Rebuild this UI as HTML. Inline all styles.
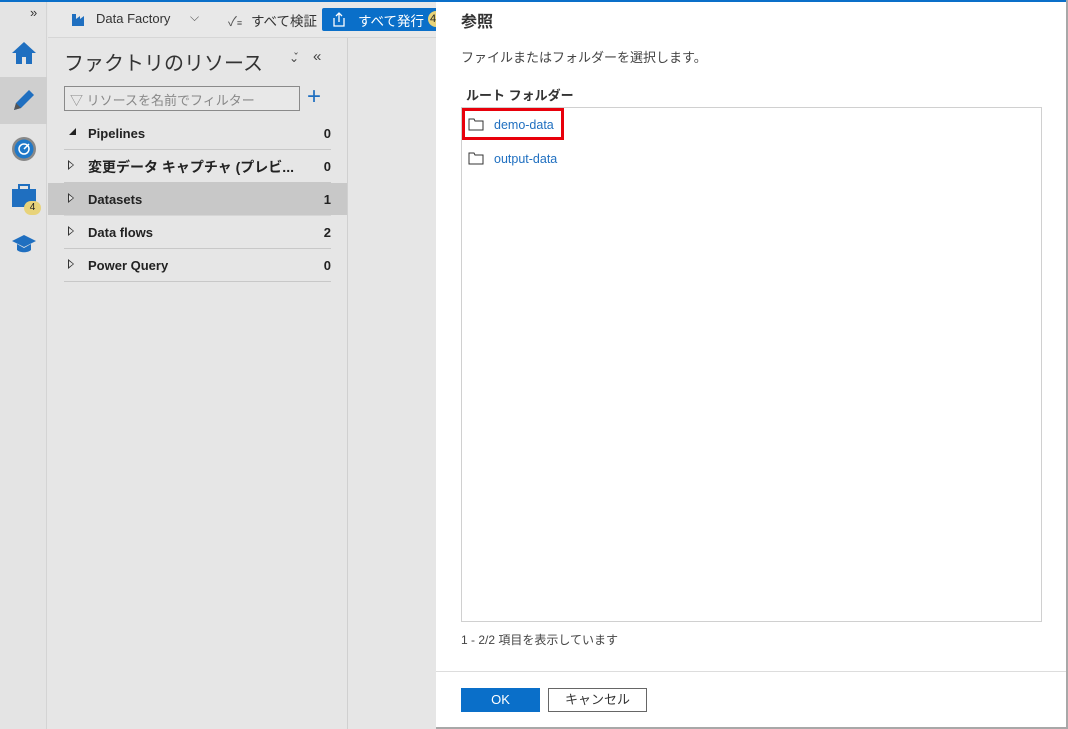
<!DOCTYPE html>
<html><head><meta charset="utf-8"><style>
*{margin:0;padding:0;box-sizing:border-box}
body{width:1068px;height:729px;overflow:hidden;background:#e6e6e6;font-family:"Liberation Sans","Noto Sans CJK JP",sans-serif;position:relative;color:#222}
.a{position:absolute}
.row{position:absolute;left:64px;width:267px;height:33px;border-bottom:1px solid #c8c8c8;font-size:13px;font-weight:bold}
.row .t{position:absolute;left:24px;top:9px}
.row .n{position:absolute;right:0;top:9px}
.row .c{position:absolute;left:4px;top:10px;width:0;height:0;border-top:5px solid transparent;border-bottom:5px solid transparent;border-left:6px solid #333}
.row .c:after{content:"";position:absolute;left:-5px;top:-3px;border-top:3px solid transparent;border-bottom:3px solid transparent;border-left:4px solid #e6e6e6}
</style></head><body>
<div class="a" style="left:0;top:0;width:1068px;height:2px;background:#0a6fc9"></div>
<div class="a" style="left:0;top:2px;width:47px;height:727px;background:#e4e4e4;border-right:1px solid #d4d4d4"></div>
<div class="a" style="left:30px;top:5px;font-size:13px;color:#333">»</div>
<svg class="a" style="left:11px;top:40px" width="26" height="26" viewBox="0 0 26 26"><path d="M13 2L1 13h4v11h6v-7h4v7h6V13h4z" fill="#1f6fc0"/></svg>
<div class="a" style="left:0;top:77px;width:47px;height:47px;background:#cfcfcf"></div>
<svg class="a" style="left:11px;top:87px" width="26" height="26" viewBox="0 0 26 26"><path d="M3 23l2-7L18 3l5 5L10 21z" fill="#1f6fc0"/><path d="M3 23l2-7 5 5z" fill="#555"/></svg>
<svg class="a" style="left:11px;top:136px" width="26" height="26"><circle cx="13" cy="13" r="12" fill="#888"/><circle cx="13" cy="13" r="9.5" fill="#1f78c8"/><circle cx="13" cy="13" r="5" fill="none" stroke="#fff" stroke-width="1.5"/><path d="M13 13l5-5" stroke="#fff" stroke-width="1.5"/></svg>
<svg class="a" style="left:11px;top:183px" width="26" height="26"><rect x="1" y="6" width="24" height="18" fill="#1f6fc0"/><rect x="8" y="2" width="10" height="5" fill="none" stroke="#1f6fc0" stroke-width="2"/></svg>
<div class="a" style="left:24px;top:201px;width:17px;height:14px;border-radius:7px;background:#e8d37a;font-size:10px;text-align:center;line-height:14px">4</div>
<svg class="a" style="left:11px;top:233px" width="26" height="22"><path d="M1 8L13 2l12 6-12 6z" fill="#1f6fc0"/><path d="M6 11v6c3 3 11 3 14 0v-6l-7 4z" fill="#1f6fc0"/></svg>
<div class="a" style="left:48px;top:2px;width:388px;height:36px;background:#e8e8e8;border-bottom:1px solid #d6d6d6"></div>
<svg class="a" style="left:72px;top:12px" width="16" height="14"><path d="M0 14V2h4v5l4-3v3l4-3v10z" fill="#1f6fc0"/></svg>
<div class="a" style="left:96px;top:11px;font-size:13px;color:#333">Data Factory</div>
<div class="a" style="left:190px;top:10px;font-size:12px;color:#555">⌵</div>
<div class="a" style="left:228px;top:11px;font-size:13px;color:#555">✓<span style="font-size:9px">≡</span></div>
<div class="a" style="left:251px;top:10px;font-size:13.5px;color:#333">すべて検証</div>
<div class="a" style="left:322px;top:8px;width:114px;height:23px;background:#0a6fc9;border-radius:2px 0 0 2px"></div>
<svg class="a" style="left:332px;top:11px" width="14" height="16"><path d="M2 7v8h10V7M7 11V2M4 5l3-3 3 3" fill="none" stroke="#fff" stroke-width="1.3"/></svg>
<div class="a" style="left:358px;top:10px;font-size:13.5px;color:#fff">すべて発行</div>
<div class="a" style="left:428px;top:11px;width:12px;height:16px;background:#e8d37a;border-radius:8px 0 0 8px;font-size:11px;padding-left:2px;line-height:16px">4</div>
<div class="a" style="left:347px;top:38px;width:1px;height:691px;background:#d0d0d0"></div>
<div class="a" style="left:64px;top:47px;font-size:20px;color:#333">ファクトリのリソース</div>
<div class="a" style="left:289px;top:51px;font-size:12px;color:#444">⌄̌</div>
<div class="a" style="left:313px;top:48px;font-size:15px;color:#444">«</div>
<div class="a" style="left:64px;top:86px;width:236px;height:25px;border:1px solid #8a8a8a;background:#e8e8e8"></div>
<div class="a" style="left:70px;top:90px;font-size:13px;color:#888">▽ リソースを名前でフィルター</div>
<div class="a" style="left:307px;top:83px;font-size:24px;color:#1f6fc0;font-weight:300">+</div>
<div class="row" style="top:117px"><span class="a" style="left:5px;top:11px;border-left:7px solid transparent;border-bottom:7px solid #222"></span><span class="t">Pipelines</span><span class="n">0</span></div>
<div class="row" style="top:150px"><span class="c"></span><span class="t" style="font-size:14px;top:7px">変更データ キャプチャ (プレビ...</span><span class="n">0</span></div>
<div class="a" style="left:48px;top:183px;width:299px;height:32px;background:#c8c8c8"></div>
<div class="row" style="top:183px;border-bottom-color:#d6d6d6"><span class="c" style="border-left-color:#333"></span><span class="t">Datasets</span><span class="n">1</span></div>
<div class="row" style="top:216px"><span class="c"></span><span class="t">Data flows</span><span class="n">2</span></div>
<div class="row" style="top:249px"><span class="c"></span><span class="t">Power Query</span><span class="n">0</span></div>
<div class="a" style="left:436px;top:2px;width:630px;height:725px;background:#fff"></div>
<div class="a" style="left:1066px;top:0;width:2px;height:729px;background:#a8a8a8"></div>
<div class="a" style="left:436px;top:727px;width:632px;height:2px;background:#a8a8a8"></div>
<div class="a" style="left:461px;top:8px;font-size:16px;font-weight:bold;color:#333">参照</div>
<div class="a" style="left:461px;top:47px;font-size:13px;color:#444">ファイルまたはフォルダーを選択します。</div>
<div class="a" style="left:466px;top:85px;font-size:13px;font-weight:bold;color:#333">ルート フォルダー</div>
<div class="a" style="left:461px;top:107px;width:581px;height:515px;border:1px solid #d0d0d0"></div>
<div class="a" style="left:462px;top:108px;width:102px;height:32px;border:3px solid #e8000b"></div>
<svg class="a" style="left:468px;top:118px" width="16" height="13"><path d="M1 1h5l1 2h8v9H1z" fill="none" stroke="#333"/></svg>
<div class="a" style="left:494px;top:118px;font-size:12.5px;color:#1f6fc0">demo-data</div>
<svg class="a" style="left:468px;top:152px" width="16" height="13"><path d="M1 1h5l1 2h8v9H1z" fill="none" stroke="#333"/></svg>
<div class="a" style="left:494px;top:152px;font-size:12.5px;color:#1f6fc0">output-data</div>
<div class="a" style="left:461px;top:631px;font-size:12px;color:#444">1 - 2/2 項目を表示しています</div>
<div class="a" style="left:436px;top:671px;width:630px;height:1px;background:#ddd"></div>
<div class="a" style="left:461px;top:688px;width:79px;height:24px;background:#0a6fc9;color:#fff;font-size:13px;text-align:center;line-height:24px">OK</div>
<div class="a" style="left:548px;top:688px;width:99px;height:24px;border:1px solid #666;font-size:13px;text-align:center;line-height:22px;color:#333">キャンセル</div>
</body></html>
